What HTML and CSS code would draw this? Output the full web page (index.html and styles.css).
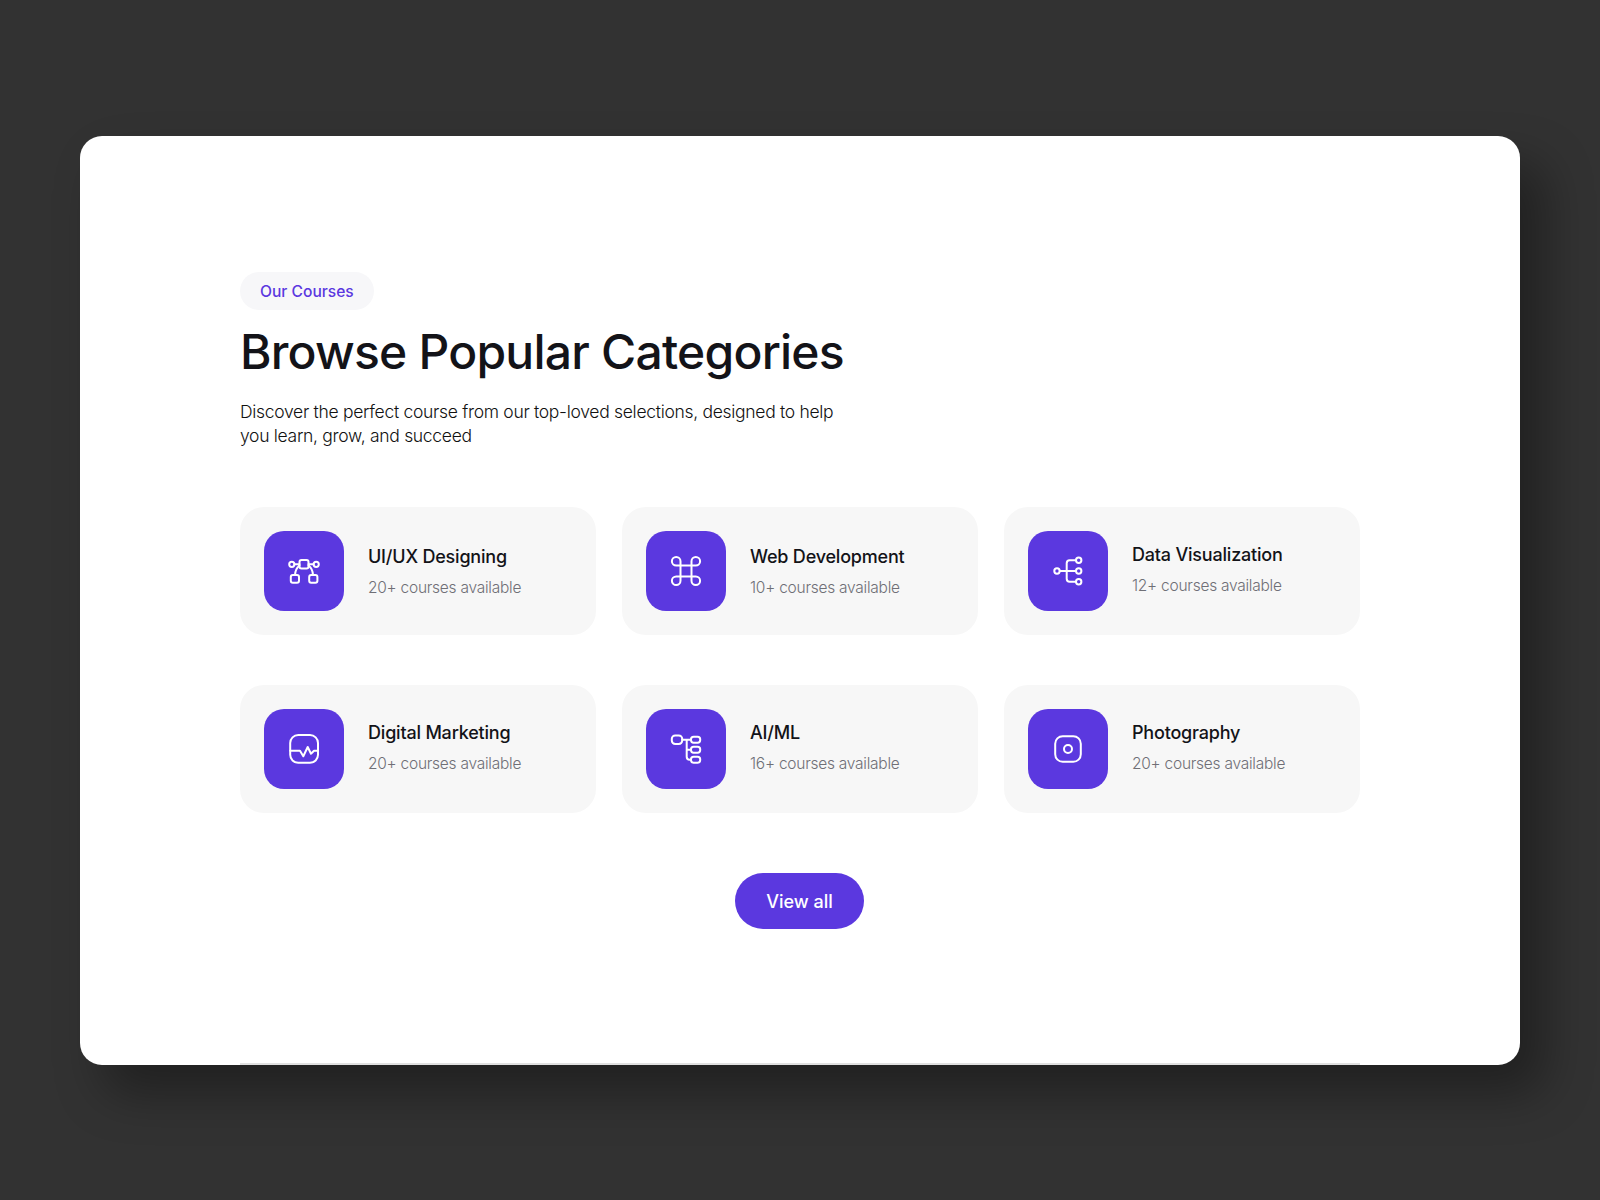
FILE: index.html
```html
<!DOCTYPE html>
<html lang="en">
<head>
    <meta charset="UTF-8">
    <meta name="viewport" content="width=device-width, initial-scale=1.0">
    <title>Browse Popular Categories</title>
    <link rel="stylesheet" href="styles.css">
</head>
<body>
    <main class="window">
        <span class="tag">Our Courses</span>
        <h1>Browse Popular Categories</h1>
        <p class="intro">Discover the perfect course from our top-loved selections, designed to help<br>you learn, grow, and succeed</p>

        <div class="grid">
            <div class="card">
                <div class="tile">
                    <svg viewBox="0 0 32 32">
                        <rect x="11.5" y="5" width="9" height="8.4" rx="2"/>
                        <circle cx="3.8" cy="9.3" r="2.6"/>
                        <circle cx="28.2" cy="9.3" r="2.6"/>
                        <rect x="2.8" y="20" width="8.2" height="7.8" rx="2"/>
                        <rect x="21.2" y="20" width="8.2" height="7.8" rx="2"/>
                        <path d="M6.4 9.3h5.1M20.5 9.3h5.1M11.5 10.5C9 12.5 7.2 16 7 20M20.5 10.5c2.5 2 4.3 5.5 4.5 9.5"/>
                    </svg>
                </div>
                <div class="card-text card-text-low">
                    <h3>UI/UX Designing</h3>
                    <p>20+ courses available</p>
                </div>
            </div>
            <div class="card">
                <div class="tile">
                    <svg viewBox="0 0 32 32">
                        <path d="M21.5 6.2V25.8a4.3 4.3 0 1 0 4.3-4.3H6.2a4.3 4.3 0 1 0 4.3 4.3V6.2a4.3 4.3 0 1 0-4.3 4.3h19.6a4.3 4.3 0 1 0-4.3-4.3"/>
                    </svg>
                </div>
                <div class="card-text card-text-low">
                    <h3>Web Development</h3>
                    <p>10+ courses available</p>
                </div>
            </div>
            <div class="card">
                <div class="tile">
                    <svg viewBox="0 0 32 32">
                        <circle cx="5" cy="16" r="2.7"/>
                        <circle cx="26.7" cy="5.3" r="2.7"/>
                        <circle cx="26.7" cy="16" r="2.7"/>
                        <circle cx="26.7" cy="26.7" r="2.7"/>
                        <path d="M7.7 16H24M24 5.3h-6.3a3 3 0 0 0-3 3v15.4a3 3 0 0 0 3 3H24"/>
                    </svg>
                </div>
                <div class="card-text">
                    <h3>Data Visualization</h3>
                    <p>12+ courses available</p>
                </div>
            </div>
            <div class="card">
                <div class="tile">
                    <svg viewBox="0 0 32 32">
                        <rect x="2.2" y="2" width="27.8" height="27.8" rx="8"/>
                        <path d="M2.2 17.7H12l3.3 5.6 4.4-9.3 3.3 6.7 3-3H30"/>
                    </svg>
                </div>
                <div class="card-text">
                    <h3>Digital Marketing</h3>
                    <p>20+ courses available</p>
                </div>
            </div>
            <div class="card">
                <div class="tile">
                    <svg viewBox="0 0 32 32">
                        <rect x="1.8" y="2.4" width="10.4" height="8.6" rx="3.4"/>
                        <rect x="21" y="3.7" width="9.2" height="6" rx="2.6"/>
                        <rect x="21" y="13.7" width="9.2" height="6" rx="2.6"/>
                        <rect x="21" y="23.7" width="9.2" height="6" rx="2.6"/>
                        <path d="M12.2 6.7H21M16.7 6.7v17a3 3 0 0 0 3 3H21M16.7 16.7H21"/>
                    </svg>
                </div>
                <div class="card-text">
                    <h3>AI/ML</h3>
                    <p>16+ courses available</p>
                </div>
            </div>
            <div class="card">
                <div class="tile">
                    <svg viewBox="0 0 32 32">
                        <rect x="3.2" y="3.2" width="25.6" height="25.6" rx="7.5"/>
                        <circle cx="16" cy="16" r="4"/>
                    </svg>
                </div>
                <div class="card-text">
                    <h3>Photography</h3>
                    <p>20+ courses available</p>
                </div>
            </div>
        </div>

        <a class="btn" href="#">View all</a>
        <div class="edge"></div>
    </main>
</body>
</html>
```
FILE: styles.css
```css
* { box-sizing: border-box; }
body { margin: 0; height: 1200px; padding: 136px 80px 135px; background-color: #323232; font-family: 'Inter', 'Liberation Sans', sans-serif; color: #131318; overflow: hidden; }

.window { height: 929px; padding: 136px 160px 0; display: flex; flex-direction: column; align-items: flex-start; background-color: #fff; border-radius: 22px; box-shadow: 24px 28px 48px rgba(0, 0, 0, 0.35); }

.tag { display: inline-flex; align-items: center; height: 38px; padding: 0 20px; border-radius: 19px; background-color: #f7f7f9; color: #5b38e0; font-size: 15.6px; font-weight: 500; }
h1 { margin: 12px 0 0; font-size: 48px; line-height: 60px; font-weight: 550; letter-spacing: -0.78px; }
.intro { margin: 18px 0 0; font-size: 17.5px; line-height: 24px; font-weight: 300; letter-spacing: -0.3px; color: #111; }

.grid { width: 100%; margin-top: 59px; display: grid; grid-template-columns: repeat(3, 1fr); gap: 50px 26px; }
.card { height: 128px; padding: 24px; display: flex; align-items: center; gap: 24px; background-color: #f7f7f7; border-radius: 24px; }
.tile { width: 80px; height: 80px; flex: none; display: flex; align-items: center; justify-content: center; background-color: #5b38df; border-radius: 20px; }
.tile svg { width: 32px; height: 32px; fill: none; stroke: #fff; stroke-width: 2; stroke-linecap: round; stroke-linejoin: round; overflow: visible; }

.card-text { padding-bottom: 3px; }
.card-text h3 { margin: 0; font-size: 18px; line-height: 24px; font-weight: 500; letter-spacing: -0.2px; }
.card-text p { margin: 8px 0 0; font-size: 15.5px; line-height: 22px; font-weight: 300; letter-spacing: -0.25px; color: #6f6f76; }
.card-text-low { padding-top: 1px; padding-bottom: 0; }

.btn { align-self: center; margin: 60px 1px 0 0; width: 129px; height: 56px; display: flex; align-items: center; justify-content: center; border-radius: 28px; background-color: #5b38df; color: #fff; font-size: 18px; font-weight: 500; text-decoration: none; }

.edge { width: 100%; height: 2px; margin-top: auto; background-color: #e0e0e0; }
```
